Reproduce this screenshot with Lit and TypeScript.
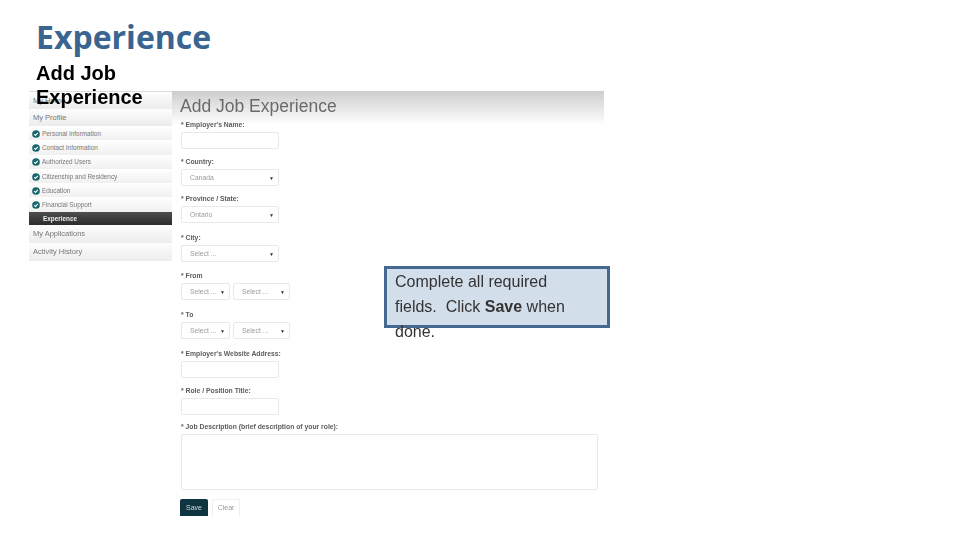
import { LitElement, html, css, svg } from "lit";
import { customElement } from "lit/decorators.js";

const check = svg`<svg class="chk" viewBox="0 0 10 10"><circle cx="5" cy="5" r="4.8" fill="#17666b"/><path d="M2.8 5.1 4.4 6.7 7.3 3.6" fill="none" stroke="#fff" stroke-width="1.4"/></svg>`;

const steps = ["Personal Information", "Contact Information", "Authorized Users", "Citizenship and Residency", "Education", "Financial Support"];

type Field = { label: string; kind: "input" | "select" | "pair" | "area"; value?: string; pitch: number };
const fields: Field[] = [
  { label: "Employer's Name:", kind: "input", pitch: 37 },
  { label: "Country:", kind: "select", value: "Canada", pitch: 37 },
  { label: "Province / State:", kind: "select", value: "Ontario", pitch: 39 },
  { label: "City:", kind: "select", value: "Select ...", pitch: 38 },
  { label: "From", kind: "pair", pitch: 39 },
  { label: "To", kind: "pair", pitch: 39 },
  { label: "Employer's Website Address:", kind: "input", pitch: 37 },
  { label: "Role / Position Title:", kind: "input", pitch: 36 },
  { label: "Job Description (brief description of your role):", kind: "area", pitch: 76 },
];

@customElement("app-root")
export class AppRoot extends LitElement {
  static styles = css`
    :host { display: block; position: relative; width: 960px; height: 540px; background: #fff; overflow: hidden; font-family: "Liberation Sans", Arial, sans-serif; }
    .title { font-family: "Open Sans", "Noto Sans", sans-serif; font-weight: 700; font-size: 32px; line-height: 40px; color: #3a6591; padding: 17px 0 0 36px; }
    .shot { margin: 34px 0 0 29px; width: 575px; height: 425px; display: flex; overflow: hidden; filter: blur(0.35px); }
    .side { width: 143px; flex: none; align-self: flex-start; display: flex; flex-direction: column; border-top: 1px solid #ddd; }
    .top { height: 17px; padding-left: 4px; display: flex; align-items: center; font-size: 7.5px; color: #777; background: linear-gradient(#fdfdfd, #ececec); }
    .top.tall { height: 18px; }
    .step { height: 14.3px; padding-left: 3px; display: flex; align-items: center; gap: 2px; font-size: 6.4px; color: #777; background: linear-gradient(#fff, #f0f0f0); }
    .chk { width: 8px; height: 8px; flex: none; margin-top: 1px; }
    .cur { height: 13px; padding-left: 14px; display: flex; align-items: center; font-size: 6.4px; font-weight: 700; color: #eee; background: linear-gradient(#4e4e4e, #2c2c2c); }
    .main { flex: 1; min-width: 0; display: flex; flex-direction: column; background: linear-gradient(#cdcdcd, #fff 34px); }
    .head { height: 30px; padding: 5px 0 0 8px; box-sizing: border-box; font-size: 17.5px; line-height: 20px; color: #6a6a6a; flex: none; }
    .form { padding-left: 9px; display: flex; flex-direction: column; }
    .field { display: flex; flex-direction: column; gap: 3px; flex: none; }
    label { font-size: 6.8px; line-height: 8px; font-weight: 700; color: #5c5c5c; white-space: nowrap; }
    .box { height: 17px; box-sizing: border-box; border: 1px solid #e9e9e9; border-radius: 2px; background: #fff; display: flex; align-items: center; justify-content: space-between; padding: 0 4px 0 8px; font-size: 6.8px; color: #9a9a9a; }
    .w { width: 98px; }
    .row { display: flex; gap: 3px; }
    .a { width: 49px; }
    .b { width: 57px; }
    .area { width: 417px; height: 56px; box-sizing: border-box; border: 1px solid #e9e9e9; border-radius: 2px; }
    .arr { font-size: 5px; color: #333; }
    .btns { display: flex; gap: 4px; margin-left: -1px; }
    .btn { width: 28px; height: 17px; box-sizing: border-box; display: flex; align-items: center; justify-content: center; font-size: 7px; border-radius: 2px 2px 0 0; padding-bottom: 1px; }
    .save { background: #0f3540; color: #cfd8da; }
    .clear { border: 1px solid #eee; border-bottom: none; color: #999; }
    .sub { position: absolute; left: 36px; top: 61px; width: 130px; font-weight: 700; font-size: 20px; line-height: 24px; color: #000; }
    .note { position: absolute; left: 384px; top: 266px; width: 226px; height: 62px; box-sizing: border-box; border: 3px solid #44688f; background: #d2dfeb; padding: 0 8px; font-size: 16px; line-height: 25px; color: #333; }
    .note p { margin: 0; width: 190px; }
  `;

  private control(f: Field) {
    const sel = (cls: string, v: string) => html`<div class="box ${cls}"><span>${v}</span><span class="arr">▼</span></div>`;
    if (f.kind === "input") return html`<div class="box w"></div>`;
    if (f.kind === "select") return sel("w", f.value!);
    if (f.kind === "pair") return html`<div class="row">${sel("a", "Select ...")}${sel("b", "Select ...")}</div>`;
    return html`<div class="area"></div>`;
  }

  render() {
    return html`
      <div class="title">Experience</div>
      <div class="shot">
        <div class="side">
          <div class="top">My Home</div>
          <div class="top">My Profile</div>
          ${steps.map((s) => html`<div class="step">${check}<span>${s}</span></div>`)}
          <div class="cur">Experience</div>
          <div class="top tall">My Applications</div>
          <div class="top tall">Activity History</div>
        </div>
        <div class="main">
          <div class="head">Add Job Experience</div>
          <div class="form">
            ${fields.map((f) => html`<div class="field" style="height:${f.pitch}px"><label>* ${f.label}</label>${this.control(f)}</div>`)}
            <div class="btns"><div class="btn save">Save</div><div class="btn clear">Clear</div></div>
          </div>
        </div>
      </div>
      <div class="sub">Add Job Experience</div>
      <div class="note"><p>Complete all required fields.&nbsp; Click <b>Save</b> when done.</p></div>
    `;
  }
}
